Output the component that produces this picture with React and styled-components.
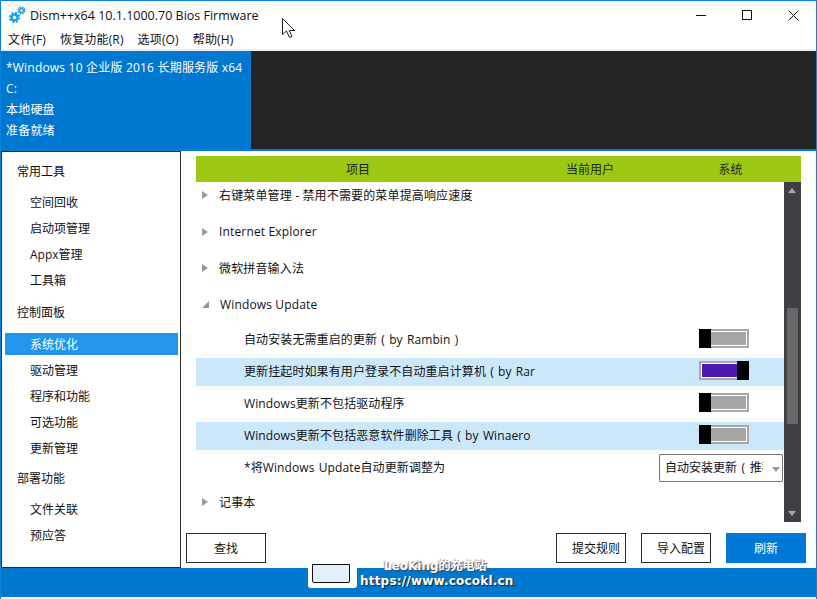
import React from "react";
import styled, { createGlobalStyle } from "styled-components";

const Global = createGlobalStyle`
  html, body { margin: 0; padding: 0; background: #fff; }
  body { font-family: "Open Sans", "Noto Sans CJK SC", sans-serif; font-size: 12px; color: #111; }
  * { box-sizing: border-box; }
`;

const Win = styled.div`
  position: relative; width: 817px; height: 599px; overflow: hidden;
  background: #fff; display: flex; flex-direction: column;
  border: 1px solid #0a84e0; border-width: 1px 1px 0 1px;
  padding-bottom: 2px;
`;
const TitleBar = styled.div`
  height: 28px; flex: none; display: flex; align-items: center; padding: 0 0 0 7px;
`;
const TitleText = styled.div`
  margin-left: 4px; font-size: 12.5px; white-space: nowrap; flex: 1;
`;
const WinBtn = styled.div`
  width: 46px; height: 28px; display: flex; align-items: center; justify-content: center;
`;
const TitleButtons = styled.div`
  display: flex;
`;
const MenuBar = styled.div`
  height: 22px; flex: none; display: flex; gap: 14px; padding: 2px 0 0 7px; align-items: center;
  border-bottom: 2px solid #eeeeee;
`;
const MenuItem = styled.div`
  font-size: 12px; line-height: 18px; white-space: nowrap; letter-spacing: .15px;
`;
const Status = styled.div`
  height: 98px; flex: none; display: flex; margin: 0 -1px;
`;
const StatusInfo = styled.div`
  width: 251px; background: #0078cf; color: #fff; padding: 6px 0 0 6px;
`;
const StatusLine = styled.div`
  height: 21px; line-height: 21px; font-size: 12px; white-space: nowrap; letter-spacing: .2px;
`;
const StatusDark = styled.div`
  flex: 1; background: #252525;
`;
const Body = styled.div`
  flex: 1; min-height: 0; display: flex; border-top: 2px solid #0078cf; margin: 0 -1px 0 0;
`;
const Sidebar = styled.div`
  width: 180px; flex: none; border: 1px solid #2a2a2a; padding-top: 7px; height: 417px;
`;
const GroupTitle = styled.div`
  height: 24px; line-height: 26px; padding-left: 15px; font-size: 12px;
  margin-top: ${p => p.$top || 0}px; margin-bottom: ${p => p.$bottom || 8}px;
`;
const NavItem = styled.div`
  height: 22px; line-height: 24px; margin: 0 2px 4px 3px; padding-left: 25px; font-size: 12px;
  background: ${p => (p.$active ? "#2196ea" : "transparent")};
  color: ${p => (p.$active ? "#fff" : "#111")};
`;
const Main = styled.div`
  flex: 1; min-width: 0; display: flex; flex-direction: column; padding: 5px 0 0 15px;
`;
const Header = styled.div`
  width: 605px; height: 26px; flex: none; background: #9cc813;
  display: grid; grid-template-columns: 324px 140px 141px; align-items: center;
  font-size: 12px; color: #222;
`;
const HeaderCell = styled.div`
  text-align: center;
`;
const ListWrap = styled.div`
  width: 605px; height: 340px; flex: none; display: flex;
`;
const List = styled.div`
  width: 588px; flex: none; display: flex; flex-direction: column;
`;
const Group = styled.div`
  height: 26px; flex: none; margin-bottom: ${p => (p.$flush ? 0 : 10.67)}px; display: flex; align-items: center;
  padding-left: 6px; font-size: 12px; white-space: pre; letter-spacing: .15px;
`;
const Caret = styled.span`
  width: 0; height: 0; display: block; flex: none; border-style: solid; margin-right: 11px;
  ${p => p.$open
    ? `border-width: 0 0 7px 7px; border-color: transparent transparent #999 transparent;`
    : `border-width: 4.5px 0 4.5px 6px; border-color: transparent transparent transparent #999;`}
`;
const Rows = styled.div`
  display: flex; flex-direction: column; gap: 4px; height: 156px; flex: none; margin: 8px 0 7px;
`;
const Row = styled.div`
  height: 28px; flex: none; display: flex; align-items: center;
  padding-left: 48px; font-size: 12px; white-space: pre; position: relative; letter-spacing: .1px;
  word-spacing: 1px; line-height: 26px;
  background: ${p => (p.$hl ? "#cbe7fa" : "transparent")};
`;
const Toggle = styled.div`
  position: absolute; left: 503px; top: 3px; width: 50px; height: 19px;
  border: 2px solid #a8a8a8; background: #fff;
`;
const ToggleFill = styled.div`
  position: absolute; inset: 1px; background: ${p => (p.$on ? "#4a18b0" : "#a6a6a6")};
`;
const Knob = styled.div`
  position: absolute; top: -2px; bottom: -2px; width: 12px; background: #000;
  ${p => (p.$on ? "right: -2px;" : "left: -2px;")}
`;
const Select = styled.div`
  position: absolute; left: 463px; top: 0; width: 124px; height: 28px; border: 1px solid #777;
  border-radius: 1px; background: #fff; display: flex; align-items: center; padding-left: 5px;
  font-size: 12px; letter-spacing: 0; word-spacing: 1.5px;
`;
const SelectText = styled.div`
  width: 98px; overflow: hidden; white-space: pre;
`;
const SelectArrow = styled.div`
  position: absolute; left: 112px; top: 12px; width: 0; height: 0;
  border-style: solid; border-width: 5px 4.5px 0 4.5px; border-color: #999 transparent transparent transparent;
`;
const ScrollBar = styled.div`
  width: 17px; flex: none; background: #403f45; position: relative;
`;
const ScrollThumb = styled.div`
  position: absolute; left: 3px; top: 126px; width: 11px; height: 116px; background: #686868;
`;
const ScrollArrow = styled.div`
  position: absolute; left: 4px; width: 0; height: 0; border-style: solid;
  ${p => p.$up
    ? `top: 6px; border-width: 0 4.5px 5px 4.5px; border-color: transparent transparent #a9a9a9 transparent;`
    : `bottom: 6px; border-width: 5px 4.5px 0 4.5px; border-color: #a9a9a9 transparent transparent transparent;`}
`;
const Actions = styled.div`
  height: 30px; flex: none; margin-top: 11px; margin-left: -10px; display: flex; gap: 15px; padding-right: 11px;
`;
const Btn = styled.div`
  width: ${p => p.$w}px; height: 30px; border: 1px solid ${p => (p.$primary ? "#0078d7" : "#2a2a2a")};
  background: ${p => (p.$primary ? "#0078d7" : "#fff")}; color: ${p => (p.$primary ? "#fff" : "#111")};
  display: flex; align-items: center; justify-content: center; font-size: 12px;
  padding-left: ${p => p.$shift || 0}px;
`;
const Spacer = styled.div`flex: 1;`;
const Footer = styled.div`
  height: 29px; flex: none; background: #0078cf; margin: 0 -1px;
`;
const Watermark = styled.div`
  position: absolute; left: 307px; top: 558px; width: 210px; height: 32px; color: #fff;
  font-family: "DejaVu Sans", "Noto Sans CJK SC", sans-serif; font-weight: 700; font-size: 12px;
  text-shadow: 1px 1px 1px #222;
`;
const WmMonitor = styled.div`
  position: absolute; left: 0; top: 5px; width: 49px; height: 24px; background: #fff; border-radius: 0 0 3px 3px;
  padding: 0 7px 5px 4px;
`;
const WmScreen = styled.div`
  height: 100%; background: #e4f0f9; border: 1px solid #111; border-radius: 0 0 2px 2px;
`;
const WmTitle = styled.div`
  position: absolute; left: 76px; top: 0; font-size: 12px; line-height: 15px; white-space: nowrap;
  text-shadow: 1px 1px 1px #444, -1px 0 1px #999;
`;
const WmUrl = styled.div`
  position: absolute; left: 52px; top: 15px; line-height: 15px; white-space: nowrap; letter-spacing: .2px;
`;
const CursorSvg = styled.svg`
  position: absolute; left: 281px; top: 17px;
`;

const Gears = () => (
  <svg width="18" height="18" viewBox="0 0 18 18">
    <g fill="none" stroke="#1aa0e6">
      <circle cx="6.5" cy="11.5" r="3" strokeWidth="2.4" />
      <circle cx="6.5" cy="11.5" r="4.8" strokeWidth="1.8" strokeDasharray="2 1.77" />
      <circle cx="13.5" cy="4.5" r="2" strokeWidth="1.6" />
      <circle cx="13.5" cy="4.5" r="3.4" strokeWidth="1.5" strokeDasharray="1.6 1.07" />
    </g>
  </svg>
);

const groups1 = ["右键菜单管理 - 禁用不需要的菜单提高响应速度", "Internet Explorer", "微软拼音输入法"];
const nav1 = ["空间回收", "启动项管理", "Appx管理", "工具箱"];
const nav2 = ["系统优化", "驱动管理", "程序和功能", "可选功能", "更新管理"];
const nav3 = ["文件关联", "预应答"];
const rows = [
  { t: "自动安装无需重启的更新 ( by Rambin )", on: false, hl: false },
  { t: "更新挂起时如果有用户登录不自动重启计算机 ( by Rar", on: true, hl: true },
  { t: "Windows更新不包括驱动程序", on: false, hl: false },
  { t: "Windows更新不包括恶意软件删除工具 ( by Winaero", on: false, hl: true },
];

export default function App() {
  return (
    <Win>
      <Global />
      <TitleBar>
        <Gears />
        <TitleText>Dism++x64 10.1.1000.70 Bios Firmware</TitleText>
        <TitleButtons>
          <WinBtn>
            <svg width="10" height="10"><path d="M0 5.5H10" stroke="#111" /></svg>
          </WinBtn>
          <WinBtn>
            <svg width="10" height="10"><rect x=".5" y=".5" width="9" height="9" fill="none" stroke="#111" /></svg>
          </WinBtn>
          <WinBtn>
            <svg width="11" height="11"><path d="M.5.5L10.5 10.5M10.5.5L.5 10.5" stroke="#111" fill="none" /></svg>
          </WinBtn>
        </TitleButtons>
      </TitleBar>
      <MenuBar>
        {["文件(F)", "恢复功能(R)", "选项(O)", "帮助(H)"].map(m => <MenuItem key={m}>{m}</MenuItem>)}
      </MenuBar>
      <Status>
        <StatusInfo>
          <StatusLine>*Windows 10 企业版 2016 长期服务版 x64</StatusLine>
          <StatusLine>C:</StatusLine>
          <StatusLine>本地硬盘</StatusLine>
          <StatusLine>准备就绪</StatusLine>
        </StatusInfo>
        <StatusDark />
      </Status>
      <Body>
        <Sidebar>
          <GroupTitle>常用工具</GroupTitle>
          {nav1.map(n => <NavItem key={n}>{n}</NavItem>)}
          <GroupTitle $top={9} $bottom={9}>控制面板</GroupTitle>
          {nav2.map((n, i) => <NavItem key={n} $active={i === 0}>{n}</NavItem>)}
          <GroupTitle $top={7}>部署功能</GroupTitle>
          {nav3.map(n => <NavItem key={n}>{n}</NavItem>)}
        </Sidebar>
        <Main>
          <Header>
            <HeaderCell>项目</HeaderCell>
            <HeaderCell>当前用户</HeaderCell>
            <HeaderCell>系统</HeaderCell>
          </Header>
          <ListWrap>
            <List>
              {groups1.map(g => <Group key={g}><Caret />{g}</Group>)}
              <Group $flush><Caret $open />Windows Update</Group>
              <Rows>
                {rows.map(r => (
                  <Row key={r.t} $hl={r.hl}>
                    {r.t}
                    <Toggle>
                      <ToggleFill $on={r.on} />
                      <Knob $on={r.on} />
                    </Toggle>
                  </Row>
                ))}
                <Row>
                  *将Windows Update自动更新调整为
                  <Select>
                    <SelectText>自动安装更新 ( 推荐 )</SelectText>
                    <SelectArrow />
                  </Select>
                </Row>
              </Rows>
              <Group $flush><Caret />记事本</Group>
            </List>
            <ScrollBar>
              <ScrollArrow $up />
              <ScrollThumb />
              <ScrollArrow />
            </ScrollBar>
          </ListWrap>
          <Actions>
            <Btn $w={80}>查找</Btn>
            <Spacer />
            <Btn $w={70} $shift={10}>提交规则</Btn>
            <Btn $w={70} $shift={10}>导入配置</Btn>
            <Btn $w={80} $primary>刷新</Btn>
          </Actions>
        </Main>
      </Body>
      <Footer />
      <Watermark>
        <WmMonitor><WmScreen /></WmMonitor>
        <WmTitle>LeoKing的充电站</WmTitle>
        <WmUrl>https://www.cocokl.cn</WmUrl>
      </Watermark>
      <CursorSvg width="14" height="21" viewBox="0 0 14 21">
        <path d="M.5.5V16.5L4.5 13L7.5 19.5L10 18.5L7.2 12.5H12.5Z" fill="#fff" stroke="#222" />
      </CursorSvg>
    </Win>
  );
}
